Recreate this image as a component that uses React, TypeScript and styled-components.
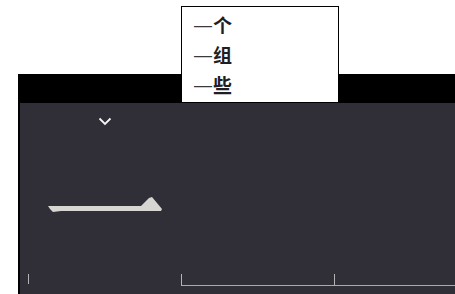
import React from "react";
import styled, { createGlobalStyle } from "styled-components";

const Global = createGlobalStyle`
  html, body { margin: 0; padding: 0; background: #ffffff; overflow: hidden; }
  body { font-family: "Noto Sans CJK SC", "Noto Sans", sans-serif; }
`;

const Stage = styled.div`
  position: relative;
  width: 455px;
  height: 294px;
  padding: 74px 0 0 18px;
  box-sizing: border-box;
  overflow: hidden;
`;

const Panel = styled.div`
  height: 220px;
  width: 460px;
  border-left: 2px solid #000;
  display: flex;
  flex-direction: column;
  background: #302f37;
`;

const Header = styled.div`
  height: 29px;
  background: #000;
  flex: none;
`;

const Body = styled.div`
  flex: 1;
  display: grid;
  grid-template-columns: repeat(3, 153px);
  padding-left: 8px;
  padding-bottom: 8px;
`;

const Column = styled.div`
  display: flex;
  flex-direction: column;
  align-items: center;
`;

const Chevron = styled.svg`
  margin-top: 14px;
  display: block;
`;

const Slider = styled.svg`
  margin-top: 70px;
  display: block;
`;

const Axis = styled.div<{ $line: boolean }>`
  margin-top: auto;
  align-self: stretch;
  height: ${(p) => (p.$line ? 11 : 10)}px;
  margin-bottom: ${(p) => (p.$line ? 0 : 2)}px;
  border-left: 1px solid #b4b3b8;
  border-bottom: ${(p) => (p.$line ? "1px solid #a9a8ad" : "none")};
`;

const Menu = styled.ul`
  position: absolute;
  left: 181px;
  top: 6px;
  width: 158px;
  box-sizing: border-box;
  margin: 0;
  padding: 3px 0 2px 11px;
  list-style: none;
  background: #fff;
  border: 1px solid #000;
`;

const Item = styled.li`
  height: 30px;
  line-height: 30px;
  font-size: 19px;
  color: #1e1e24;
  display: flex;
  align-items: center;
`;

const Dash = styled.span`
  font-family: "DejaVu Sans", sans-serif;
  font-size: 20px;
  font-weight: 400;
  color: #3a3a3a;
`;

const Word = styled.span`
  font-weight: 700;
`;

const items = ["个", "组", "些"];

export default function App() {
  return (
    <>
      <Global />
      <Stage>
        <Panel>
          <Header />
          <Body>
            <Column>
              <Chevron width="14" height="9" viewBox="0 0 14 9">
                <path d="M1.5 1.5 L7 7 L12.5 1.5" fill="none" stroke="#f4f4f6" strokeWidth="1.8" />
              </Chevron>
              <Slider width="116" height="17" viewBox="0 0 116 17">
                <path
                  d="M1 10 L94 10 L102 2 L105 1 L115 13 L114 15 L14 15 L6 16 L3 13 Z"
                  fill="#d8d6d3"
                />
              </Slider>
              <Axis $line={false} />
            </Column>
            <Column>
              <Axis $line />
            </Column>
            <Column>
              <Axis $line />
            </Column>
          </Body>
        </Panel>
        <Menu>
          {items.map((w) => (
            <Item key={w}>
              <Dash>—</Dash>
              <Word>{w}</Word>
            </Item>
          ))}
        </Menu>
      </Stage>
    </>
  );
}
